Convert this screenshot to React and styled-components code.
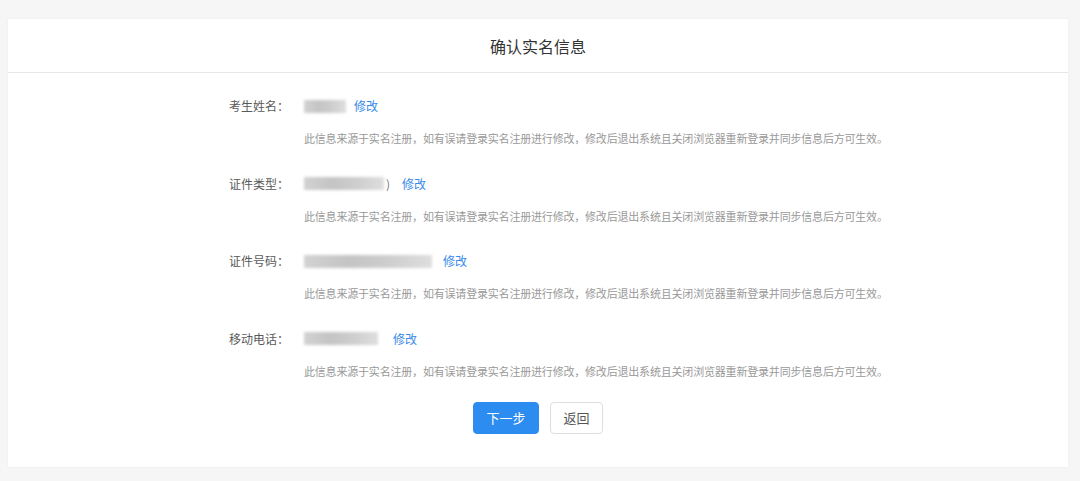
import React from "react";
import styled, { createGlobalStyle } from "styled-components";

const GlobalStyle = createGlobalStyle`
  html, body {
    margin: 0;
    padding: 0;
    background: #f6f6f7;
    font-family: "Noto Sans CJK SC", "Noto Sans", "Liberation Sans", sans-serif;
  }
`;

const Page = styled.div`
  padding: 19px 12px 15px 8px;
`;

const Card = styled.div`
  background: #ffffff;
  box-shadow: 0 0 2px rgba(0, 0, 0, 0.06);
`;

const Header = styled.div`
  height: 53px;
  display: flex;
  align-items: center;
  justify-content: center;
  border-bottom: 1px solid #e6e6e8;
  font-size: 16px;
  color: #333333;
`;

const Body = styled.div`
  padding: 23px 0 33px 0;
`;

const Rows = styled.div`
  display: flex;
  flex-direction: column;
  gap: 25.5px;
`;

const Row = styled.div`
  display: grid;
  grid-template-columns: 80px 1fr;
  column-gap: 15px;
  row-gap: 12px;
  padding-left: 201px;
`;

const Label = styled.div`
  text-align: right;
  font-size: 12px;
  line-height: 20px;
  color: #5a5a5a;
`;

const Value = styled.div`
  display: flex;
  align-items: center;
  font-size: 12px;
  line-height: 20px;
  color: #666666;
`;

const Mask = styled.span`
  display: inline-block;
  width: ${(p) => p.$w}px;
  height: 13px;
  background: linear-gradient(
    90deg,
    #d2d2d2 0%,
    #c4c4c4 35%,
    #cdcdcd 65%,
    #dedede 100%
  );
  filter: blur(1.6px);
`;

const Tail = styled.span`
  color: #777777;
  margin-left: 2px;
`;

const Edit = styled.a`
  color: #3a8ae8;
  margin-left: ${(p) => p.$gap}px;
  cursor: pointer;
  text-decoration: none;
`;

const Hint = styled.div`
  grid-column: 2;
  font-size: 11px;
  line-height: 20px;
  letter-spacing: -0.19px;
  color: #999999;
  white-space: nowrap;
`;

const Actions = styled.div`
  display: flex;
  justify-content: center;
  gap: 11px;
  margin-top: 21px;
`;

const Button = styled.button`
  height: 32px;
  padding: 0 12.5px;
  font-family: inherit;
  font-size: 13px;
  border-radius: 4px;
  cursor: pointer;
  border: 1px solid ${(p) => (p.$primary ? "#2d8cf0" : "#dcdee2")};
  background: ${(p) => (p.$primary ? "#2d8cf0" : "#ffffff")};
  color: ${(p) => (p.$primary ? "#ffffff" : "#555555")};
`;

const HINT =
  "此信息来源于实名注册，如有误请登录实名注册进行修改，修改后退出系统且关闭浏览器重新登录并同步信息后方可生效。";

const fields = [
  { label: "考生姓名：", mask: 42, tail: "", gap: 8 },
  { label: "证件类型：", mask: 80, tail: ")", gap: 12 },
  { label: "证件号码：", mask: 128, tail: "", gap: 11 },
  { label: "移动电话：", mask: 74, tail: "", gap: 15 },
];

export default function App() {
  return (
    <>
      <GlobalStyle />
      <Page>
        <Card>
          <Header>确认实名信息</Header>
          <Body>
            <Rows>
              {fields.map((f) => (
                <Row key={f.label}>
                  <Label>{f.label}</Label>
                  <Value>
                    <Mask $w={f.mask} />
                    {f.tail && <Tail>{f.tail}</Tail>}
                    <Edit $gap={f.gap}>修改</Edit>
                  </Value>
                  <Hint>{HINT}</Hint>
                </Row>
              ))}
            </Rows>
            <Actions>
              <Button $primary>下一步</Button>
              <Button>返回</Button>
            </Actions>
          </Body>
        </Card>
      </Page>
    </>
  );
}
